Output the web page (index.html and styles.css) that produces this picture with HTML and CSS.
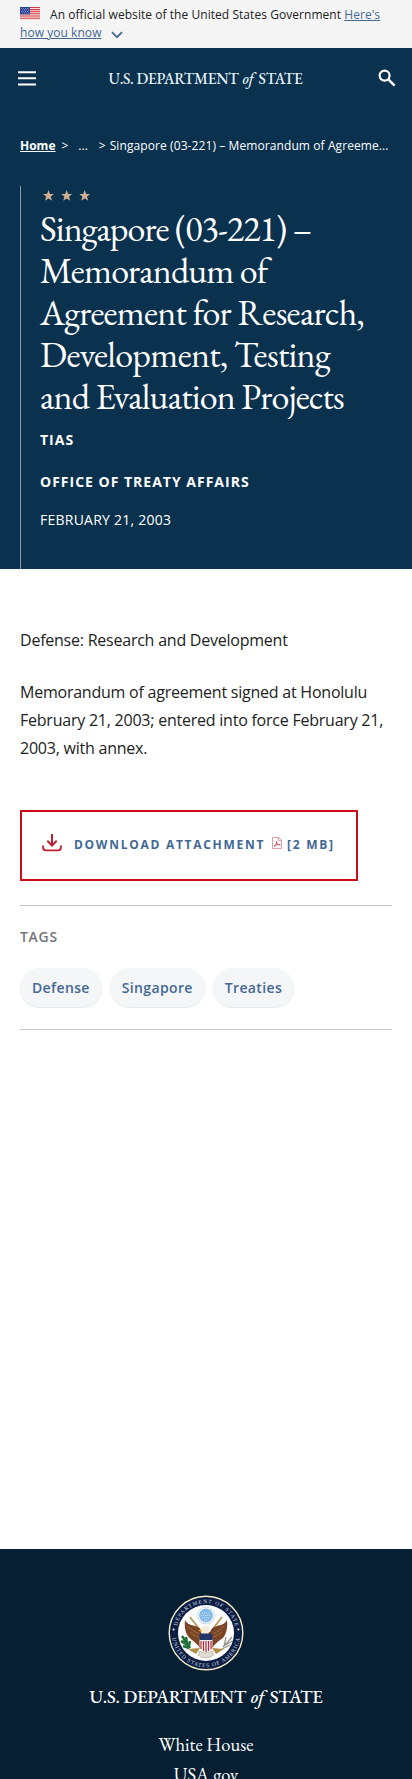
FILE: index.html
```
<!DOCTYPE html>
<html lang="en">
<head>
<meta charset="utf-8">
<meta name="viewport" content="width=device-width, initial-scale=1">
<title>Singapore (03-221) – Memorandum of Agreement</title>
<link rel="stylesheet" href="styles.css">
</head>
<body>
<div class="banner">
  <svg class="flag" viewBox="0 0 20 13" width="20" height="13" aria-hidden="true"><rect width="20" height="13" fill="#f3dedf"/><path d="M0 .5h20M0 2.6h20M0 4.7h20M0 6.8h20M0 8.9h20M0 11.2h20" stroke="#dd3c40" stroke-width="1.05"/><rect width="10" height="7.4" fill="#2d4596"/><path d="M1 1.5h8M2 3h7M1 4.5h8M2 6h7" stroke="#9aa8da" stroke-width=".8" stroke-dasharray=".9 1.1"/></svg><span class="banner-text">An official website of the United States Government</span> <a href="#">Here's<br>how you know</a><svg class="chevron" viewBox="0 0 12 8" width="12" height="8" aria-hidden="true"><path d="M1 1.2l5 5 5-5" fill="none" stroke="#426894" stroke-width="1.8"/></svg>
</div>
<header class="topbar">
  <svg class="menu" viewBox="0 0 18 15" width="18" height="15"><path d="M0 1.2h18M0 7.3h18M0 13.6h18" stroke="#fff" stroke-width="2"/></svg>
  <div class="wordmark">U.S. DEPARTMENT <i>of</i> STATE</div>
  <svg class="search" viewBox="0 0 18 18" width="18" height="18"><circle cx="6.6" cy="6.6" r="5" fill="none" stroke="#fff" stroke-width="2.1"/><path d="M10.3 10.3l6.3 6.3" stroke="#fff" stroke-width="2.5"/></svg>
</header>
<section class="hero">
  <nav class="crumbs"><a href="#">Home</a><span class="gt">&gt;</span><span class="dots">...</span><span class="gt2">&gt;</span><span class="here">Singapore (03-221) – Memorandum of Agreeme...</span></nav>
  <div class="hero-body">
    <svg class="stars" viewBox="0 0 48 12" width="48" height="12" fill="#cfae91"><path id="star" d="M5.500 0l1.500 3.900 4 .1-3.200 2.600L9 10.700 5.500 8.400 2 10.700l1.200-4.100L0 4l4-.1z"/><use href="#star" x="18.200"/><use href="#star" x="36.200"/></svg>
    <h1><span class="l1">Singapore (03-221) –</span> <span class="l2">Memorandum of</span> <span class="l3">Agreement for Research,</span> <span class="l4">Development, Testing</span> <span class="l5">and Evaluation Projects</span></h1>
    <p class="kind">TIAS</p>
    <p class="office">OFFICE OF TREATY AFFAIRS</p>
    <p class="date">FEBRUARY 21, 2003</p>
  </div>
</section>
<main>
  <p class="copy">Defense: Research and Development</p>
  <p class="copy">Memorandum of agreement signed at Honolulu February 21, 2003; entered into force February 21, 2003, with annex.</p>
  <a class="download" href="#">
    <svg class="dl" viewBox="0 0 20 18" width="20" height="18" fill="none" stroke="#bd1f2d" stroke-width="2"><path d="M10 0v11M5.300 6.800L10 11.500l4.700-4.700"/><path d="M1 11.500v1.800q0 3 3 3h12q3 0 3-3v-1.800" stroke-width="1.800"/></svg>
    <span class="dl-label">DOWNLOAD ATTACHMENT</span>
    <svg class="pdf" viewBox="0 0 10 12" width="10" height="12" fill="none" stroke="#d9878e" stroke-width=".8"><path d="M.5.5h6l3 3v8h-9zM6.500.5v3h3"/><path d="M2 9.500C4 8.500 5 6 4.600 4c-.8 2 1.400 4 3.700 3.800C6 7 3.500 8 2 9.500z" stroke="#cf3d49"/></svg>
    <span class="size">[2 MB]</span>
  </a>
  <section class="tags">
    <h2>TAGS</h2>
    <div class="pills"><a href="#">Defense</a><a href="#">Singapore</a><a href="#">Treaties</a></div>
  </section>
</main>
<footer>
  <svg class="seal" viewBox="0 0 76 76" width="76" height="76">
    <defs><path id="top" d="M8.200 38a29.800 29.800 0 0 1 59.600 0"/><path id="bottom" d="M3.800 38a34.200 34.200 0 0 0 68.400 0"/></defs>
    <circle cx="38" cy="38" r="36.800" fill="#0b1d42" stroke="#f3ecc6" stroke-width="1.400"/>
    <circle cx="38" cy="38" r="28" fill="#fff"/>
    <g class="seal-text"><text><textPath href="#top" startOffset="7" textLength="80">DEPARTMENT OF STATE</textPath></text><text><textPath href="#bottom" startOffset="5" textLength="97">UNITED STATES OF AMERICA</textPath></text></g>
    <circle cx="5.600" cy="34.500" r="1" fill="#fff"/><circle cx="70.400" cy="34.500" r="1" fill="#fff"/>
    <path d="M22 22l10 13M54 22L44 35" stroke="#b59a5c" stroke-width="1.800"/>
    <path d="M17 25c2 4 6 5 10 6 4 1 6 3 7 6h8c1-3 3-5 7-6 4-1 8-2 10-6 1 9-1 17-7 20-3 2-6 5-8 8H32c-2-3-5-6-8-8-6-4-8-11-7-20z" fill="#7a4526"/>
    <path d="M20 31c3 4 7 6 12 8M22 37c3 3 6 4 9 5M56 31c-3 4-7 6-12 8M54 37c-3 3-6 4-9 5" fill="none" stroke="#aa7748" stroke-width=".8"/>
    <path d="M32 34q5-6 10-1l-2 8h-6z" fill="#f5edda"/><path d="M33 34l-3 2 4 .5z" fill="#d9a63d"/>
    <circle cx="38" cy="20.500" r="8.500" fill="#fff" stroke="#b5c9da" stroke-width=".7"/><circle cx="38" cy="20.500" r="6.900" fill="#86bce9"/><path d="M34 18h8M33 20.500h10M34 23h8M36 25.500h4" stroke="#bfddf5" stroke-dasharray="1 1"/>
    <path d="M31.500 43.500h13v7q-1 5-6.500 7-5.500-2-6.500-7z" fill="#eee"/><path d="M33 46v8M35.500 46v10M38 46v11M40.500 46v10M43 46v8" stroke="#ba2d40" stroke-width="1.200"/><path d="M31.500 38.500h13v6.500h-13z" fill="#203466"/>
    <path d="M14 41l8 12M13 46l7 4M15 51l6 2M18 42l1 7M22 46l-1 5" stroke="#24703b" stroke-width="2.600"/>
    <path d="M64 42l-9 10M64 46l-8 5M62 50l-8 4M58 42l-2 9" stroke="#98938b" stroke-width="1.200"/>
    <path d="M20 54l12-1-4 6zM56 54l-12-1 4 6z" fill="#b28d45"/><path d="M32 56q6 4 12 0l2 4q-8 6-16 0z" fill="#e0ddd1" stroke="#aaa391" stroke-width=".6"/>
  </svg>
  <div class="foot-mark">U.S. DEPARTMENT <i>of</i> STATE</div>
  <a class="f1" href="#">White House</a>
  <a class="f2" href="#">USA.gov</a>
</footer>
</body>
</html>
```
FILE: styles.css
```
* { box-sizing: border-box; }
html, body { height: 1779px; overflow: hidden; }
body { margin: 0; width: 412px; display: flex; flex-direction: column; background: #fff; color: #222; font-family: "Open Sans", "Noto Sans", sans-serif; }
h1, h2, p { margin: 0; }
.banner { height: 48px; padding: 6px 0 0 20px; background: #f5f5f5; font-size: 12px; line-height: 18px; letter-spacing: .05px; white-space: nowrap; flex: none; }
.banner a { color: #426894; }
.flag { margin-right: 10px; vertical-align: -1px; }
.chevron { margin-left: 10px; vertical-align: -2px; }
.topbar { flex: none; height: 62px; padding: 0 16px 2px 18px; background: #0a314d; display: flex; align-items: center; justify-content: space-between; }
.wordmark, .foot-mark, h1, footer a { font-family: "EB Garamond", "Liberation Serif", serif; font-weight: 400; color: #fff; white-space: nowrap; }
.wordmark { font-size: 15.500px; font-weight: 500; letter-spacing: -.29px; width: 197px; color: #e6f1f8; }
.wordmark i, .foot-mark i { margin: 0 2px 0 1px; }
.hero { flex: none; height: 459px; background: #0a314d; padding: 26px 20px 0; display: flex; flex-direction: column; color: #fff; }
.crumbs { font-size: 12px; line-height: 20px; white-space: nowrap; display: flex; }
.crumbs a { color: #fff; font-weight: 700; }
.gt { margin-left: 6px; }
.dots { margin-left: 10px; }
.gt2 { margin-left: 11px; }
.here { margin-left: 4px; letter-spacing: .09px; }
.hero-body { margin-top: 30px; flex: 1; border-left: 1px solid #89999f; padding: 4px 0 0 19px; }
.stars { display: block; margin-left: 3px; }
h1 { margin-top: 6px; font-size: 36px; line-height: 42px; }
h1 span { display: block; width: max-content; }
.l1 { letter-spacing: -.95px; }
.l2 { letter-spacing: -.87px; }
.l3 { letter-spacing: -.72px; }
.l4 { letter-spacing: -.7px; }
.l5 { letter-spacing: -.83px; }
.kind, .office { font-size: 14px; line-height: 20px; font-weight: 700; letter-spacing: 1px; }
.kind { margin-top: 12px; }
.office { margin-top: 22px; }
.date { margin-top: 18px; font-size: 14px; line-height: 20px; letter-spacing: .24px; }
main { flex: none; height: 980px; padding: 57px 20px 0; }
.copy { font-size: 16px; line-height: 28px; letter-spacing: -.23px; margin-bottom: 24px; }
.copy + .copy { margin-right: -8px; }
.download { display: flex; width: 338px; height: 71px; margin-top: 48px; border: 2px solid #c80c18; padding: 22px 0 0 20px; color: #426894; font-size: 12px; line-height: 22px; font-weight: 700; text-decoration: none; white-space: nowrap; }
.dl-label { margin-left: 12px; letter-spacing: 1.72px; }
.pdf { margin: 3px 0 0 7px; }
.size { margin-left: 5px; letter-spacing: 1.7px; }
.tags { margin-top: 24px; height: 125px; border-top: 1px solid #c4c6c7; border-bottom: 1px solid #c4c6c7; }
.tags h2 { margin-top: 21px; font-size: 14px; line-height: 20px; font-weight: 600; letter-spacing: .7px; color: #757575; }
.pills { display: flex; gap: 8px; margin-top: 21px; }
.pills a { height: 39px; padding: 0 12px; border-radius: 20px; background: #f5f6f7; box-shadow: 0 1px 1px #e6e8e9; font-size: 14px; line-height: 40px; font-weight: 600; letter-spacing: .36px; color: #426894; text-decoration: none; }
footer { flex: none; height: 230px; overflow: hidden; background: #071f33; display: flex; flex-direction: column; align-items: center; padding-top: 46px; }
.seal { flex: none; }
.seal-text { font: 5.500px "Liberation Serif", serif; fill: #d4dbe5; }
.foot-mark { font-size: 18.500px; font-weight: 500; letter-spacing: -.25px; line-height: 24px; margin-top: 14px; }
footer a { text-decoration: none; font-size: 18.500px; line-height: 30px; }
.f1 { margin-top: 21px; }
```
